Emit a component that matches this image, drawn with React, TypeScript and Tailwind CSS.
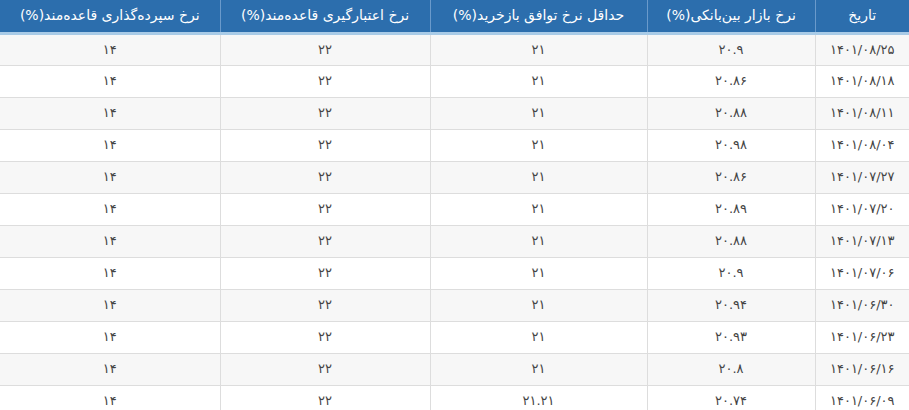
const HEADERS = [
  "تاریخ",
  "نرخ بازار بین‌بانکی(%)",
  "حداقل نرخ توافق بازخرید(%)",
  "نرخ اعتبارگیری قاعده‌مند(%)",
  "نرخ سپرده‌گذاری قاعده‌مند(%)",
];

const ROWS: string[][] = [
  ["۱۴۰۱/۰۸/۲۵", "۲۰.۹", "۲۱", "۲۲", "۱۴"],
  ["۱۴۰۱/۰۸/۱۸", "۲۰.۸۶", "۲۱", "۲۲", "۱۴"],
  ["۱۴۰۱/۰۸/۱۱", "۲۰.۸۸", "۲۱", "۲۲", "۱۴"],
  ["۱۴۰۱/۰۸/۰۴", "۲۰.۹۸", "۲۱", "۲۲", "۱۴"],
  ["۱۴۰۱/۰۷/۲۷", "۲۰.۸۶", "۲۱", "۲۲", "۱۴"],
  ["۱۴۰۱/۰۷/۲۰", "۲۰.۸۹", "۲۱", "۲۲", "۱۴"],
  ["۱۴۰۱/۰۷/۱۳", "۲۰.۸۸", "۲۱", "۲۲", "۱۴"],
  ["۱۴۰۱/۰۷/۰۶", "۲۰.۹", "۲۱", "۲۲", "۱۴"],
  ["۱۴۰۱/۰۶/۳۰", "۲۰.۹۴", "۲۱", "۲۲", "۱۴"],
  ["۱۴۰۱/۰۶/۲۳", "۲۰.۹۳", "۲۱", "۲۲", "۱۴"],
  ["۱۴۰۱/۰۶/۱۶", "۲۰.۸", "۲۱", "۲۲", "۱۴"],
  ["۱۴۰۱/۰۶/۰۹", "۲۰.۷۴", "۲۱.۲۱", "۲۲", "۱۴"],
];

// column widths, right to left
const WIDTHS = ["w-[94px]", "w-[168px]", "w-[217px]", "w-[210px]", "w-[220px]"];

export default function App() {
  return (
    <div
      dir="rtl"
      className="w-[909px] h-[410px] overflow-hidden bg-white"
      style={{ fontFamily: '"DejaVu Sans", "Noto Sans", sans-serif' }}
    >
      <table className="w-[909px] border-collapse table-fixed">
        <colgroup>
          {WIDTHS.map((w, i) => (
            <col key={i} className={w} />
          ))}
        </colgroup>
        <thead>
          <tr className="h-[33px] bg-[#2c6ead] border-b-[3px] border-[#a9cbe7]">
            {HEADERS.map((h, i) => (
              <th
                key={i}
                className="text-white font-normal text-[14px] text-center border-l border-[#6a9acb] last:border-l-0 px-2"
              >
                {h}
              </th>
            ))}
          </tr>
        </thead>
        <tbody>
          {ROWS.map((row, r) => (
            <tr
              key={r}
              className={`h-[32px] border-b border-[#dddddd] ${r % 2 === 0 ? "bg-[#f7f7f7]" : "bg-white"}`}
            >
              {row.map((c, i) => (
                <td
                  key={i}
                  className="text-center text-[13px] text-[#444] border-l border-[#dddddd] last:border-l-0"
                >
                  {c}
                </td>
              ))}
            </tr>
          ))}
        </tbody>
      </table>
    </div>
  );
}
